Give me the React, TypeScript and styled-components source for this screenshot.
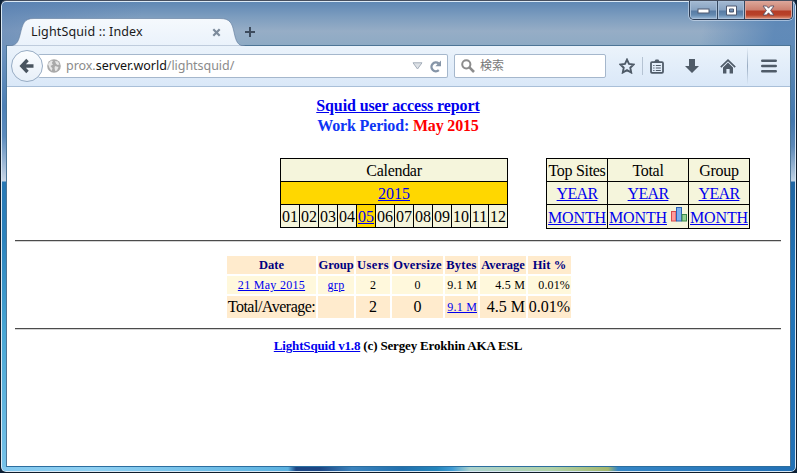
import React from "react";
import styled, { createGlobalStyle, css } from "styled-components";

const GlobalStyle = createGlobalStyle`
  html, body { margin: 0; padding: 0; overflow: hidden; }
  * { box-sizing: border-box; }
`;

const uiFont = `"Noto Sans", "Noto Sans CJK JP", sans-serif`;
const pageFont = `"Liberation Serif", "Times New Roman", serif`;

/* ---------- window frame ---------- */

const Desktop = styled.div`
  width: 797px;
  height: 473px;
  background: #0a2038;
`;

const WindowFrame = styled.div`
  width: 797px;
  height: 473px;
  display: flex;
  flex-direction: column;
  border: 1px solid #101c2a;
  border-top-color: #474f5f;
  border-radius: 6px;
  overflow: hidden;
  box-shadow: inset 0 0 0 1px #dbe9f5;
  background:
    linear-gradient(to right, #82c8ee 0, #8fd0f2 90px, #5cb2e0 286px, #1c4684 294px, #1c4684 318px, #3b83bd 350px, #2170ae 400px, #2385bb 435px, #3f9bd4 450px, #abd2cd 468px, #b0d1a8 550px, #a4b76e 606px, #3485c5 616px, #2270b5 100%) 1px 466px / 793px 4px no-repeat,
    linear-gradient(#6e93bf 0, #4d80b5 60px, #5b8bbd 90px, #c9d6e6 135px, #2878b4 136px, #2c83bd 195px, #48a6d4 285px, #78c3e9 100%) 1px 45px / 5px 426px no-repeat,
    linear-gradient(#5f8ab4 0, #4377ad 75px, #5c88b7 100px, #c0d2e4 135px, #1f65a2 136px, #2376b9 240px, #2371b4 100%) 789px 45px / 5px 426px no-repeat,
    linear-gradient(100deg, rgba(86,125,177,.55), transparent 18%, transparent 88%, rgba(84,130,181,.8) 97%) 0 0 / 100% 45px no-repeat,
    linear-gradient(#5d86b3 0, #7d9dbf 16px, #96adc6 30px, #8daac4 45px);
`;

const TitleBar = styled.header`
  flex: none;
  height: 44px;
  display: flex;
  padding: 0 3px 0 6px;
`;

const Tab = styled.div`
  position: relative;
  width: 238px;
  height: 28px;
  margin-top: 17px;
  display: flex;
  align-items: center;
  padding: 0 24px;
  justify-content: space-between;
  font: 12.5px/28px ${uiFont};
  color: #1a1a1a;
  z-index: 1;
`;

const TabShape = styled.svg`
  position: absolute;
  inset: 0;
  z-index: -1;
`;

const TabTitle = styled.span`
  letter-spacing: 0.14px;
  white-space: nowrap;
`;

const NewTab = styled.svg`
  margin: 26px 0 0;
`;

const WindowButtons = styled.div`
  margin-left: auto;
  height: 19px;
  width: 104px;
  display: flex;
  border: 1px solid #2b3b53;
  border-top: 0;
  border-radius: 0 0 5px 5px;
  overflow: hidden;
  box-shadow: 0 0 0 1px rgba(220, 232, 245, 0.55);
`;

const WindowButton = styled.div<{ $w: number; $close?: boolean }>`
  width: ${(p) => p.$w}px;
  display: flex;
  align-items: center;
  justify-content: center;
  border: 1px solid ${(p) => (p.$close ? "#dda59c" : "#a9bfd8")};
  background: ${(p) =>
    p.$close
      ? "linear-gradient(#dba395 0, #cc8070 8px, #b53c26 9px, #b9422a 13px, #d78569 100%)"
      : "linear-gradient(#a1b7d0 0, #87a3c2 8px, #587ba4 9px, #6389b0 13px, #91b0cf 100%)"};
  & + & {
    box-shadow: -1px 0 0 #34475f;
    margin-left: 1px;
  }
`;

const Client = styled.div`
  flex: 1;
  margin: 0 5px 5px;
  display: flex;
  flex-direction: column;
  border: 1px solid #4d7596;
  border-bottom-color: #2c6e9f;
  background: #fff;
`;

/* ---------- navigation toolbar ---------- */

const Toolbar = styled.nav`
  flex: none;
  height: 41px;
  display: flex;
  align-items: center;
  padding-left: 4px;
  border-bottom: 1px solid #a9bfd8;
  background: linear-gradient(#ebf3fb, #dae8f8);
`;

const BackButton = styled.div`
  width: 32px;
  height: 32px;
  flex: none;
  display: flex;
  align-items: center;
  justify-content: center;
  border: 1px solid #97acc4;
  border-radius: 50%;
  background: linear-gradient(#fbfdff, #e7eff8);
  z-index: 1;
`;

const Field = styled.div<{ $w: number }>`
  width: ${(p) => p.$w}px;
  height: 24px;
  flex: none;
  display: flex;
  align-items: center;
  border: 1px solid #a5b7cc;
  border-radius: 2px;
  background: #fff;
  font: 12.5px/22px ${uiFont};
  color: #8b8b8b;
`;

const AddressField = styled(Field)`
  margin-left: -5px;
  padding: 0 5px 0 9px;
  border-left: 0;
`;

const Address = styled.span`
  margin: 0 auto 0 5px;
  letter-spacing: -0.04px;
  b {
    font-weight: 400;
    color: #111;
  }
`;

const SearchField = styled(Field)`
  margin-left: 6px;
  padding-left: 6px;
  gap: 5px;
  font-size: 12px;
  color: #777;
`;

const ToolIcon = styled.svg<{ $gap: number }>`
  flex: none;
  margin-left: ${(p) => p.$gap}px;
`;

const Separator = styled.i<{ $gap: number; $tall?: boolean }>`
  flex: none;
  width: 1px;
  height: ${(p) => (p.$tall ? 38 : 18)}px;
  margin-left: ${(p) => p.$gap}px;
  background: ${(p) => (p.$tall ? "linear-gradient(transparent, #98abc1 50%, transparent)" : "#b5c3d3")};
`;

/* ---------- report page ---------- */

const Page = styled.main`
  flex: 1;
  padding: 9px 9px 0 8px;
  font: 16px/20px ${pageFont};
  color: #000;
  white-space: nowrap;
`;

const Link = styled.a<{ $tracking?: number }>`
  color: #0000ee;
  text-decoration: underline;
  letter-spacing: ${(p) => (p.$tracking === undefined ? "inherit" : `${p.$tracking}px`)};
`;

const Heading = styled.h1`
  margin: 0;
  height: 62px;
  font: bold 16px/20px ${pageFont};
  letter-spacing: -0.17px;
  text-align: center;
  color: #0d35f5;
  em {
    font-style: normal;
    color: #f00;
  }
`;

const Summary = styled.div`
  display: flex;
  align-items: flex-start;
  padding-left: 265px;
  gap: 38px;
`;

const GridTable = styled.div<{ $columns: string; $rows: string }>`
  display: grid;
  grid-template-columns: ${(p) => p.$columns};
  grid-template-rows: ${(p) => p.$rows};
  gap: 1px;
  padding: 1px;
  background: #000;
`;

const GridCell = styled.div<{ $span?: number; $gold?: boolean; $tracking?: number }>`
  display: flex;
  align-items: center;
  justify-content: center;
  padding-top: 2px;
  overflow: hidden;
  letter-spacing: ${(p) => p.$tracking ?? 0}px;
  background: ${(p) => (p.$gold ? "#ffd700" : "#f5f5dc")};
  ${(p) => p.$span && css`grid-column: span ${p.$span};`}
`;

const ChartIcon = styled.svg`
  margin: -6px 0 0 4px;
  flex: none;
`;

const Rule = styled.hr<{ $top: number }>`
  height: 2px;
  margin: ${(p) => p.$top}px 0 0;
  border: 0;
  border-top: 1px solid #4b4b4b;
  background: #d4d4d4;
`;

const Report = styled.div`
  display: grid;
  grid-template-columns: 89px 36px 34px 51px 33px 46px 43px;
  grid-template-rows: 18px 18px 22px;
  gap: 2px;
  margin: 14px 0 0 212px;
`;

const ReportCell = styled.div<{
  $kind: "head" | "row" | "total";
  $right?: boolean;
  $small?: boolean;
  $tracking?: number;
}>`
  display: flex;
  align-items: center;
  justify-content: ${(p) => (p.$right ? "flex-end" : "center")};
  padding: 0 1px;
  letter-spacing: ${(p) => p.$tracking ?? 0}px;
  background: ${(p) => (p.$kind === "row" ? "#fff8dc" : "#ffebcd")};
  color: ${(p) => (p.$kind === "head" ? "#000080" : "#000")};
  font-weight: ${(p) => (p.$kind === "head" ? 700 : 400)};
  font-size: ${(p) => (p.$kind === "total" && !p.$small ? 16 : p.$kind === "head" ? 12.5 : 12)}px;
`;

const Footer = styled.footer`
  margin-top: 6px;
  font: bold 13px/20px ${pageFont};
  letter-spacing: -0.16px;
  text-align: center;
`;

const months = ["01", "02", "03", "04", "05", "06", "07", "08", "09", "10", "11", "12"];
const headers = [
  { label: "Date", tracking: 0 },
  { label: "Group", tracking: 0 },
  { label: "Users", tracking: 0.4 },
  { label: "Oversize", tracking: 0.25 },
  { label: "Bytes", tracking: 0.25 },
  { label: "Average", tracking: 0 },
  { label: "Hit %", tracking: 0.1 },
];

const steel = "#4f5b68";

export default function App() {
  return (
    <Desktop>
      <GlobalStyle />
      <WindowFrame>
        <TitleBar>
          <Tab>
            <TabShape width="238" height="28" viewBox="0 0 238 28">
              <defs>
                <linearGradient id="tab" x2="0" y2="1">
                  <stop offset="0" stopColor="#f5f9fd" />
                  <stop offset="1" stopColor="#eaf2fb" />
                </linearGradient>
              </defs>
              <path d="M0 28C9 28 11 25 13 17C16 5 17 .5 27 .5H213C223 .5 225 5 227 14C229 24 231 28 238 28Z" fill="url(#tab)" stroke="#65809f" strokeOpacity=".65" />
            </TabShape>
            <TabTitle>LightSquid :: Index</TabTitle>
            <svg width="9" height="9" viewBox="0 0 9 9">
              <path d="M1.3 1.3 7.7 7.7M7.7 1.3 1.3 7.7" stroke="#7d8b9c" strokeWidth="2.2" />
            </svg>
          </Tab>
          <NewTab width="10" height="10" viewBox="0 0 10 10">
            <path d="M5 0v10M0 5h10" stroke="#3d4b5d" strokeWidth="2" />
          </NewTab>
          <WindowButtons>
            <WindowButton $w={27}>
              <svg width="13" height="7" viewBox="0 0 13 7"><rect x="1" y="2" width="11" height="4" fill="#fff" stroke="#4e5970" /></svg>
            </WindowButton>
            <WindowButton $w={26}>
              <svg width="13" height="11" viewBox="0 0 13 11"><path fillRule="evenodd" d="M1.5 1h10v9h-10zM4.5 4v3h4V4z" fill="#fff" stroke="#4e5970" /></svg>
            </WindowButton>
            <WindowButton $w={47} $close>
              <svg width="13" height="11" viewBox="0 0 13 11">
                <path d="M1 1h3.6l1.9 2.2L8.4 1H12L8.6 5.5 12 10H8.4L6.5 7.8 4.6 10H1l3.4-4.5z" fill="#fff" stroke="#575064" strokeWidth=".9" />
              </svg>
            </WindowButton>
          </WindowButtons>
        </TitleBar>

        <Client>
          <Toolbar>
            <BackButton>
              <svg width="16" height="16" viewBox="0 0 16 16">
                <path d="M8.5 2 2.8 8 8.5 14M3 8h11.5" fill="none" stroke="#49545f" strokeWidth="3.4" />
              </svg>
            </BackButton>
            <AddressField $w={410}>
              <svg width="14" height="14" viewBox="0 0 14 14">
                <circle cx="7" cy="7" r="6.8" fill="#a9a9a9" />
                <path d="M1 5 4 1.5 6 2 4.8 4 6 5.5 3.5 7 5.5 9.5 4.5 12 2.5 9zM8 2l3 .5 1.5 3-2 .5L9 4.8zM8 7l3.5 1-1.5 3.5L8.2 12 7.5 9z" fill="#e6e6e6" />
              </svg>
              <Address>prox.<b>server.world</b>/lightsquid/</Address>
              <svg width="11" height="8" viewBox="0 0 11 8">
                <path d="M1 .8h9L5.5 7z" fill="#dde1e6" stroke="#a3adb9" />
              </svg>
              <ToolIcon $gap={6} width="13" height="13" viewBox="0 0 13 13">
                <path d="M9.6 3.4A4.4 4.4 0 1 0 9.8 10.2" fill="none" stroke="#8695a7" strokeWidth="2.4" />
                <path d="M12 .6V6.2H6.4z" fill="#8695a7" />
              </ToolIcon>
            </AddressField>
            <SearchField $w={152}>
              <svg width="14" height="14" viewBox="0 0 14 14">
                <circle cx="5.3" cy="5.3" r="4.1" fill="none" stroke="#8c8c8c" strokeWidth="2" />
                <path d="m8.2 8.2 4.8 4.8" stroke="#8c8c8c" strokeWidth="2.6" />
              </svg>
              <span>検索</span>
            </SearchField>
            <ToolIcon $gap={13} width="16" height="16" viewBox="0 0 16 16">
              <path d="m8 1.6 2 4.3 4.7.6-3.4 3.2.9 4.8L8 12.1l-4.2 2.4.9-4.8L1.3 6.5 6 5.9z" fill="none" stroke={steel} strokeWidth="1.9" />
            </ToolIcon>
            <Separator $gap={7} />
            <ToolIcon $gap={7} width="14" height="15" viewBox="0 0 14 15">
              <rect x="1" y="3.2" width="12" height="10.6" rx="1" fill="none" stroke={steel} strokeWidth="1.8" />
              <path d="M3.5 4 5.6.6h2.8L10.5 4z" fill={steel} />
              <path d="M3.2 6.5h1.3M5.8 6.5h5M3.2 9h1.3M5.8 9h5M3.2 11.5h1.3M5.8 11.5h5" stroke={steel} strokeWidth="1.2" />
            </ToolIcon>
            <ToolIcon $gap={21} width="14" height="14" viewBox="0 0 14 14">
              <path d="M4 0h6v7h4l-7 7-7-7h4z" fill={steel} />
            </ToolIcon>
            <ToolIcon $gap={21} width="16" height="15" viewBox="0 0 16 15">
              <path d="M.8 8.2 8 1.2l7.2 7" fill="none" stroke={steel} strokeWidth="1.7" />
              <path d="m8 3.6 5 4.8V14.5H9.6V10H6.4v4.5H3V8.4z" fill={steel} />
            </ToolIcon>
            <Separator $gap={11} $tall />
            <ToolIcon $gap={13} width="16" height="14" viewBox="0 0 16 14">
              <path d="M1.3 1.8h13.4M1.3 7h13.4M1.3 12.2h13.4" stroke={steel} strokeWidth="2.6" strokeLinecap="round" />
            </ToolIcon>
          </Toolbar>

          <Page>
            <Heading>
              <Link $tracking={-0.11}>Squid user access report</Link>
              <br />
              Work Period: <em>May 2015</em>
            </Heading>
            <Summary>
              <GridTable $columns="repeat(10, 18px) 17px 18px" $rows="22px 22px 22px">
                <GridCell $span={12} $tracking={-0.3}>Calendar</GridCell>
                <GridCell $span={12} $gold><Link>2015</Link></GridCell>
                {months.map((m) => (
                  <GridCell key={m} $gold={m === "05"}>{m === "05" ? <Link>{m}</Link> : m}</GridCell>
                ))}
              </GridTable>
              <GridTable $columns="60px 80px 60px" $rows="22px 22px 23px">
                <GridCell $tracking={-0.3}>Top Sites</GridCell>
                <GridCell $tracking={-0.3}>Total</GridCell>
                <GridCell $tracking={-0.3}>Group</GridCell>
                <GridCell $tracking={-0.7}><Link>YEAR</Link></GridCell>
                <GridCell $tracking={-0.7}><Link>YEAR</Link></GridCell>
                <GridCell $tracking={-0.7}><Link>YEAR</Link></GridCell>
                <GridCell $tracking={-0.15}><Link>MONTH</Link></GridCell>
                <GridCell $tracking={-0.15}>
                  <Link>MONTH</Link>
                  <ChartIcon width="16" height="15" viewBox="0 0 16 15">
                    <rect x=".5" y="4.5" width="4.5" height="9.5" fill="#ff9c9c" stroke="#d94b4b" />
                    <rect x="5.5" y=".5" width="5" height="13.5" fill="#7db0f0" stroke="#2c62b5" />
                    <rect x="11" y="7.5" width="4.5" height="6.5" fill="#93d093" stroke="#3c8a4b" />
                  </ChartIcon>
                </GridCell>
                <GridCell $tracking={-0.15}><Link>MONTH</Link></GridCell>
              </GridTable>
            </Summary>
            <Rule $top={11} />
            <Report>
              {headers.map((h) => (
                <ReportCell key={h.label} $kind="head" $tracking={h.tracking}>{h.label}</ReportCell>
              ))}
              <ReportCell $kind="row" $tracking={0.3}><Link>21 May 2015</Link></ReportCell>
              <ReportCell $kind="row" $tracking={0.3}><Link>grp</Link></ReportCell>
              <ReportCell $kind="row">2</ReportCell>
              <ReportCell $kind="row">0</ReportCell>
              <ReportCell $kind="row" $right $tracking={0.2}>9.1 M</ReportCell>
              <ReportCell $kind="row" $right $tracking={0.2}>4.5 M</ReportCell>
              <ReportCell $kind="row" $right $tracking={0.15}>0.01%</ReportCell>
              <ReportCell $kind="total" $tracking={-0.5}>Total/Average:</ReportCell>
              <ReportCell $kind="total" />
              <ReportCell $kind="total">2</ReportCell>
              <ReportCell $kind="total">0</ReportCell>
              <ReportCell $kind="total" $right $small $tracking={0.2}><Link>9.1 M</Link></ReportCell>
              <ReportCell $kind="total" $right>4.5 M</ReportCell>
              <ReportCell $kind="total" $right>0.01%</ReportCell>
            </Report>
            <Rule $top={10} />
            <Footer>
              <Link>LightSquid v1.8</Link> (c) Sergey Erokhin AKA ESL
            </Footer>
          </Page>
        </Client>
      </WindowFrame>
    </Desktop>
  );
}
